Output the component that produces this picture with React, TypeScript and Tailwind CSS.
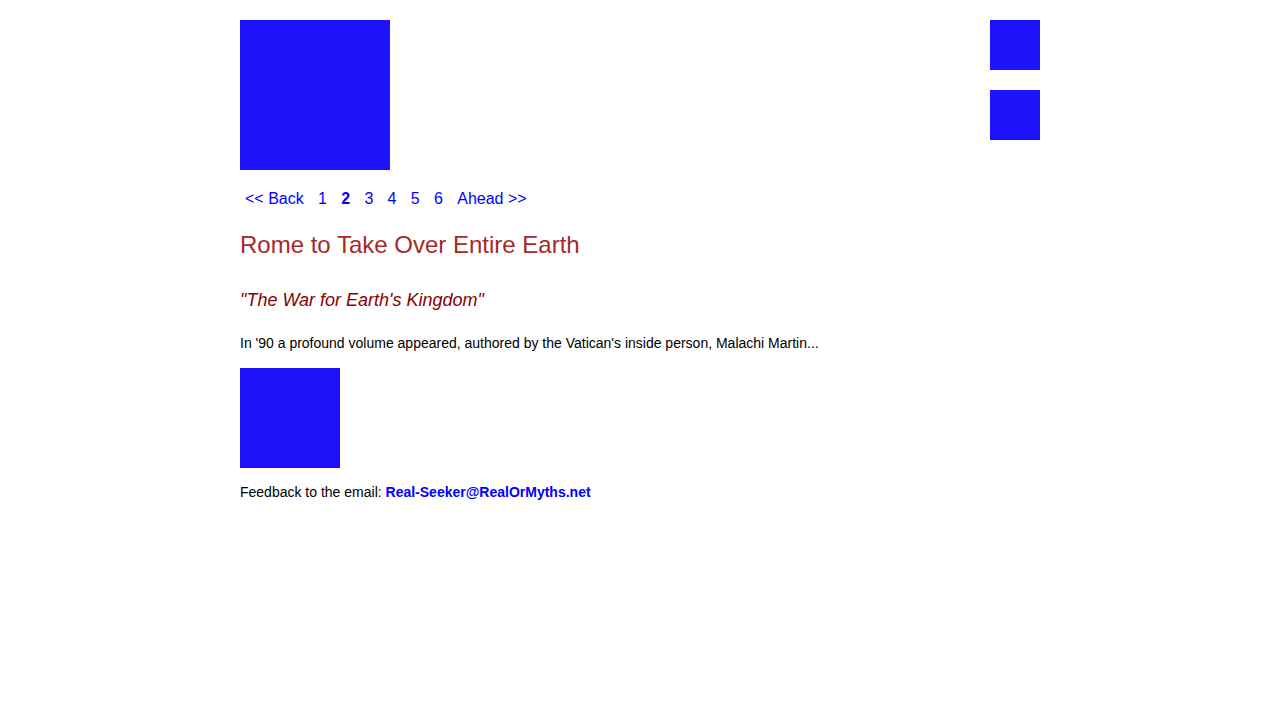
export default function App() {
  const pages = ["1", "2", "3", "4", "5", "6"];
  return (
    <div className="min-h-screen bg-white font-['Liberation_Sans',Arial,sans-serif]">
      <div className="mx-auto flex w-[800px] justify-between pt-5">
        <div className="flex flex-col">
          <div className="h-[150px] w-[150px] bg-[#1e12fa]" />

          <nav className="mt-[17px] flex items-center gap-[14.3px] pl-[5px] text-[16px] leading-6 text-[#0000ff]">
            <a href="#">&lt;&lt; Back</a>
            {pages.map((p) => (
              <a key={p} href="#" className={p === "2" ? "font-bold" : ""}>
                {p}
              </a>
            ))}
            <a href="#">Ahead &gt;&gt;</a>
          </nav>

          <h1 className="mt-5 text-[24px] leading-7 text-[#a52a2a]">Rome to Take Over Entire Earth</h1>

          <h2 className="mt-[30px] text-[18px] italic leading-[22px] text-[#8b0000]">
            "The War for Earth's Kingdom"
          </h2>

          <p className="mt-6 text-[14px] leading-4 text-black">
            In '90 a profound volume appeared, authored by the Vatican's inside person, Malachi Martin...
          </p>

          <div className="mt-[17px] h-[100px] w-[100px] bg-[#1e12fa]" />

          <p className="mt-4 text-[14px] leading-4 text-black">
            Feedback to the email:{" "}
            <a href="#" className="font-bold text-[#0000ff]">
              Real-Seeker@RealOrMyths.net
            </a>
          </p>
        </div>

        <div className="flex flex-col gap-5">
          <div className="h-[50px] w-[50px] bg-[#1e12fa]" />
          <div className="h-[50px] w-[50px] bg-[#1e12fa]" />
        </div>
      </div>
    </div>
  );
}
